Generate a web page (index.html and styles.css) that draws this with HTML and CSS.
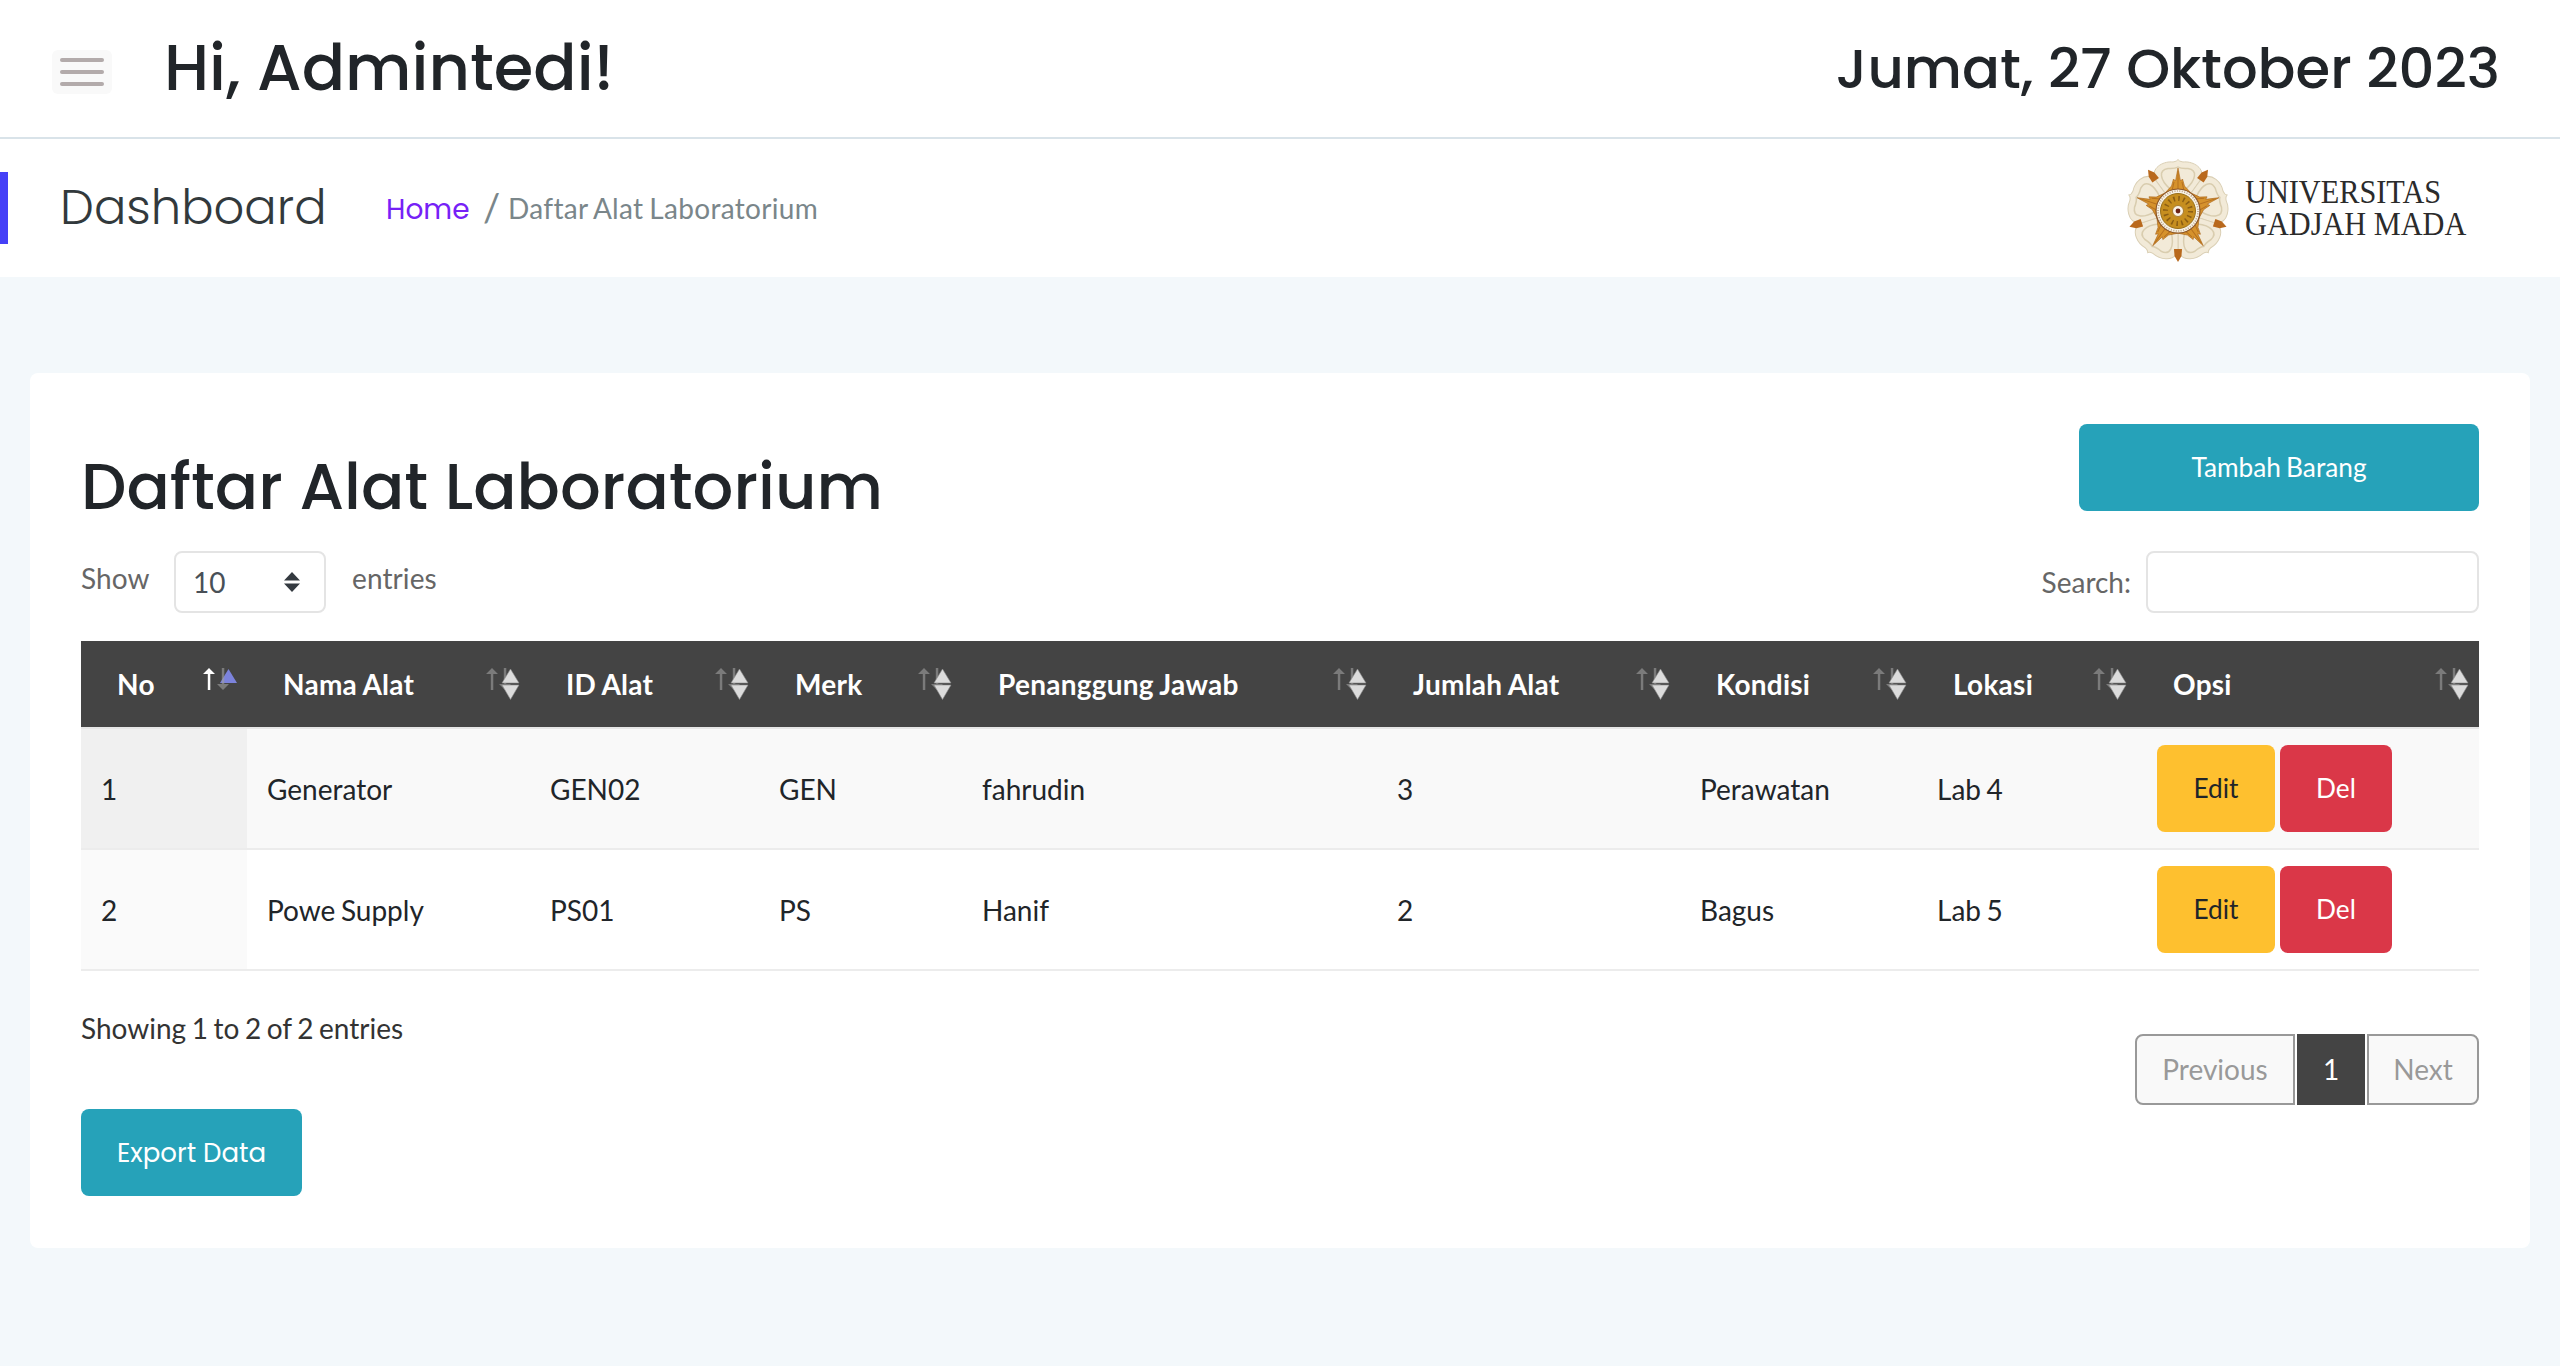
FILE: index.html
```
<!DOCTYPE html>
<html lang="id">
<head>
<meta charset="utf-8">
<title>Daftar Alat Laboratorium</title>
<link rel="stylesheet" href="styles.css">
</head>
<body>
<svg class="defs" aria-hidden="true">
  <defs>
    <symbol id="sort-both" viewBox="0 0 36 44">
      <path class="arrow-off" d="M5.800 13H1L7 7L13 13H8.300V29H5.800Z"/>
      <path class="arrow-off" d="M18.800 7H21.300V23H26L20 29L14 23H18.800Z"/>
      <path class="tri" d="M25.500 8L34 22H17Z"/>
      <path class="tri" d="M17 24H34L25.500 38.500Z"/>
    </symbol>
    <symbol id="sort-asc" viewBox="0 0 36 44">
      <path class="tri-asc" d="M26.500 8L35 22H18Z"/>
      <path class="arrow-on" d="M5.800 13H1L7 7L13 13H8.300V29H5.800Z"/>
      <path class="arrow-off" d="M19.800 7H22.300V23H27L21 29L15 23H19.800Z"/>
    </symbol>
    <g id="petal">
      <path class="petal-fill" d="M0 0L-24 -33C-26 -45 -13 -50 -5 -49Q-1 -49.500 0 -51.500Q1 -49.500 5 -49C13 -50 26 -45 24 -33Z"/>
      <path class="petal-line" d="M-8 -22C-18 -31 -20 -41 -10 -42.500Q-3 -42 0 -44Q3 -42 10 -42.500C20 -41 18 -31 8 -22"/>
    </g>
    <path id="sepal" d="M0 51L-3.500 45L-4 38H4L3.500 45Z"/>
    <g id="ray">
      <path class="ray-fill" d="M0 -43L-2.500 -30L-4.500 -32L-6.500 -25L-13 -18H13L6.500 -25L4.500 -32L2.500 -30Z"/>
      <path class="ray-line" d="M0 -40V-22M-4 -29L-6 -20M4 -29L6 -20"/>
    </g>
  </defs>
</svg>

<header class="topbar">
  <div class="topbar-left">
    <button class="menu" aria-label="Menu"><span></span><span></span><span></span></button>
    <h1 class="greeting">Hi, Admintedi!</h1>
  </div>
  <div class="date">Jumat, 27 Oktober 2023</div>
</header>

<section class="crumbbar">
  <div class="page-name">Dashboard</div>
  <nav class="crumbs"><a class="home">Home</a><span class="slash">/</span><span class="here">Daftar Alat Laboratorium</span></nav>
  <div class="brand">
    <svg class="seal" viewBox="-51 -52 102 104">
      <use href="#petal"/><use href="#petal" transform="rotate(72)"/><use href="#petal" transform="rotate(144)"/><use href="#petal" transform="rotate(216)"/><use href="#petal" transform="rotate(288)"/>
      <g class="sepals">
        <use href="#sepal"/><use href="#sepal" transform="rotate(72)"/><use href="#sepal" transform="rotate(144)"/><use href="#sepal" transform="rotate(216)"/><use href="#sepal" transform="rotate(288)"/>
      </g>
      <use href="#ray"/><use href="#ray" transform="rotate(72)"/><use href="#ray" transform="rotate(144)"/><use href="#ray" transform="rotate(216)"/><use href="#ray" transform="rotate(288)"/>
      <circle class="ring" r="22"/>
      <circle class="ring-beads" r="20"/>
      <circle class="disc" r="17.500"/>
      <circle class="disc-marks" r="12.500"/>
      <circle class="hub" r="5.500"/>
      <circle class="pupil" r="2.400"/>
    </svg>
    <div class="wordmark"><span>UNIVERSITAS</span><span>GADJAH MADA</span></div>
  </div>
</section>

<main class="card">
  <div class="card-head">
    <h2 class="title">Daftar Alat Laboratorium</h2>
    <button class="btn info add">Tambah Barang</button>
  </div>
  <div class="tools">
    <div class="length">
      <span class="tool-label">Show</span>
      <div class="select"><span>10</span><svg viewBox="0 0 16 20"><path d="M8 0L16 8.500H0ZM0 11.500H16L8 20Z"/></svg></div>
      <span class="tool-label">entries</span>
    </div>
    <div class="search"><span>Search:</span><input class="search-input" type="text" aria-label="Search"></div>
  </div>
  <table class="grid">
    <colgroup><col class="c1"><col class="c2"><col class="c3"><col class="c4"><col class="c5"><col class="c6"><col class="c7"><col class="c8"><col class="c9"></colgroup>
    <thead>
      <tr>
        <th><div class="th">No<svg><use href="#sort-asc"/></svg></div></th>
        <th><div class="th">Nama Alat<svg><use href="#sort-both"/></svg></div></th>
        <th><div class="th">ID Alat<svg><use href="#sort-both"/></svg></div></th>
        <th><div class="th">Merk<svg><use href="#sort-both"/></svg></div></th>
        <th><div class="th">Penanggung Jawab<svg><use href="#sort-both"/></svg></div></th>
        <th><div class="th">Jumlah Alat<svg><use href="#sort-both"/></svg></div></th>
        <th><div class="th">Kondisi<svg><use href="#sort-both"/></svg></div></th>
        <th><div class="th">Lokasi<svg><use href="#sort-both"/></svg></div></th>
        <th><div class="th">Opsi<svg><use href="#sort-both"/></svg></div></th>
      </tr>
    </thead>
    <tbody>
      <tr class="odd"><td class="sorted">1</td><td>Generator</td><td>GEN02</td><td>GEN</td><td>fahrudin</td><td>3</td><td>Perawatan</td><td>Lab 4</td><td><div class="actions"><button class="btn edit">Edit</button><button class="btn del">Del</button></div></td></tr>
      <tr><td class="sorted">2</td><td>Powe Supply</td><td>PS01</td><td>PS</td><td>Hanif</td><td>2</td><td>Bagus</td><td>Lab 5</td><td><div class="actions"><button class="btn edit">Edit</button><button class="btn del">Del</button></div></td></tr>
    </tbody>
  </table>
  <div class="foot">
    <div class="foot-left">
      <div class="info-text">Showing 1 to 2 of 2 entries</div>
      <button class="btn info export">Export Data</button>
    </div>
    <div class="pager"><span class="page prev">Previous</span><span class="page current">1</span><span class="page next">Next</span></div>
  </div>
</main>
</body>
</html>
```
FILE: styles.css
```
* { box-sizing: border-box; }
body {
  margin: 0;
  min-height: 1366px;
  background: #f3f8fb;
  color: #212529;
  font-family: Lato, "Liberation Sans", sans-serif;
  font-size: 28px;
  line-height: 42px;
  word-spacing: -1.600px;
}
h1, h2 { margin: 0; }
button { border: 0; font-family: inherit; padding: 0; word-spacing: inherit; }
.defs { position: absolute; width: 0; height: 0; }

.greeting, .date, .page-name, .home, .title, .export {
  font-family: Poppins, Inter, sans-serif;
  white-space: nowrap;
  word-spacing: 0;
}

.topbar {
  display: flex;
  justify-content: space-between;
  height: 139px;
  padding: 0 60px 0 52px;
  background: #fff;
  border-bottom: 2px solid #d9e3e9;
}
.topbar-left { display: flex; gap: 52px; }
.menu {
  display: flex;
  flex-direction: column;
  gap: 8px;
  width: 60px;
  height: 44px;
  margin-top: 50px;
  padding: 8px;
  background: #f9f9f9;
  border-radius: 6px;
}
.menu span { width: 44px; height: 4px; border-radius: 2px; background: #b3abab; }
.greeting { margin-top: 30px; font-size: 64px; font-weight: 500; line-height: 76px; }
.date { margin-top: 34px; font-size: 56px; font-weight: 500; line-height: 70px; }

.crumbbar {
  display: flex;
  height: 138px;
  background: #fff;
}
.page-name {
  width: 386px;
  height: 72px;
  margin-top: 33px;
  padding-left: 52px;
  border-left: 8px solid #4540f7;
  font-size: 48px;
  font-weight: 300;
  line-height: 71px;
  color: #32393c;
}
.crumbs { display: flex; margin-top: 49px; color: #7a868a; }
.home { width: 97px; margin-top: 1px; font-size: 28px; color: #7621f6; }
.slash { width: 25px; margin-top: -2px; font-size: 38px; }
.here { margin-top: -1px; letter-spacing: .32px; }
.brand { display: flex; margin-left: auto; padding-right: 91px; }
.seal { width: 102px; height: 104px; margin-top: 20px; }
.wordmark {
  display: flex;
  flex-direction: column;
  width: 224px;
  margin: 37px 0 0 16px;
  font-family: "Liberation Serif", serif;
  font-size: 33px;
  line-height: 32px;
  color: #2b2b2b;
  white-space: nowrap;
  word-spacing: 0;
  transform: scaleX(.918);
  transform-origin: left;
}
.petal-fill { fill: #f2ead8; stroke: #dacfb4; stroke-width: 1; }
.petal-line { fill: none; stroke: #d9cdaf; stroke-width: 1.500; }
.sepals { fill: #b9691d; }
.ray-fill { fill: #d6922c; stroke: #a9641d; stroke-width: .6; }
.ray-line { fill: none; stroke: #b5701f; stroke-width: 1; }
.ring { fill: #f8f2e6; stroke: #8b5527; stroke-width: 1.2; }
.ring-beads { fill: none; stroke: #b9a184; stroke-width: 1.600; stroke-dasharray: 1 1.5; }
.disc { fill: #c68e1f; stroke: #99701b; stroke-width: 1; }
.disc-marks { fill: none; stroke: #8a5d14; stroke-width: 5; stroke-dasharray: 1.5 3.400; }
.hub { fill: #fbf4e8; stroke: #a77c33; stroke-width: 1; }
.pupil { fill: #6d2415; }

.card {
  height: 875px;
  margin: 96px 30px 0;
  padding: 51px 51px 0;
  border-radius: 8px;
  background: #fff;
}
.card-head { display: flex; justify-content: space-between; height: 127px; }
.title { margin-top: 25px; font-size: 64px; font-weight: 500; line-height: 76px; }
.btn { height: 87px; border-radius: 8px; font-size: 26.250px; line-height: 40px; }
.info { background: #26a2b9; color: #fff; }
.add { width: 400px; padding-bottom: 1px; }

.tools { display: flex; justify-content: space-between; height: 90px; color: #666; }
.length, .search { display: flex; }
.tool-label { margin-top: 6px; letter-spacing: .1px; }
.length .tool-label:first-child { width: 93px; }
.select {
  display: flex;
  justify-content: space-between;
  align-items: center;
  width: 152px;
  height: 62px;
  margin-right: 26px;
  padding: 0 24px 0 17px;
  border: 2px solid #e4e4e4;
  border-radius: 8px;
  color: #495057;
}
.select svg { width: 16px; height: 20px; fill: #343a40; }
.search { align-items: flex-start; gap: 15px; }
.search span { margin-top: 10px; }
.search-input { width: 333px; height: 62px; border: 2px solid #e4e4e4; border-radius: 8px; background: #fff; }

.grid { width: 2398px; table-layout: fixed; border-collapse: separate; border-spacing: 0; }
.c1 { width: 166px; }
.c2 { width: 283px; }
.c3 { width: 229px; }
.c4 { width: 203px; }
.c5 { width: 415px; }
.c6 { width: 303px; }
.c7 { width: 237px; }
.c8 { width: 220px; }
.c9 { width: 342px; }
th {
  height: 88px;
  padding: 0;
  background: #444;
  border-bottom: 2px solid #e6e6e6;
  color: #fff;
  font-weight: 700;
  letter-spacing: .25px;
  word-spacing: -.8px;
  text-align: left;
}
.th { display: flex; justify-content: space-between; align-items: center; height: 86px; padding: 0 9px 0 36px; }
.th svg { width: 36px; height: 44px; margin-top: -2px; }
.arrow-on { fill: #fff; }
.arrow-off { fill: #a0a0a0; fill-opacity: .6; }
.tri { fill: #dcdcdc; stroke: #8c8c8c; stroke-width: .6; }
.tri-asc { fill: #7c83dc; }
td { height: 121px; padding: 0 20px; border-bottom: 2px solid #ececec; }
.odd td { background: #f9f9f9; }
td.sorted { background: #fafafa; }
.odd td.sorted { background: #f0f0f0; }
.actions { display: flex; gap: 5px; margin-top: -1px; }
.edit { width: 118px; background: #fec02f; color: #212529; }
.del { width: 112px; background: #da3748; color: #fff; }

.foot { display: flex; justify-content: space-between; }
.foot-left { padding-top: 36px; color: #333; }
.info-text { height: 102px; }
.export { width: 221px; font-size: 26px; }
.pager { display: flex; gap: 2px; margin-top: 63px; height: 71px; }
.page { border: 2px solid #999; background: #f9f9f9; color: #999; line-height: 67px; text-align: center; }
.prev { width: 160px; border-radius: 8px 0 0 8px; }
.current { width: 68px; background: #444; border-color: #444; color: #fff; }
.next { width: 112px; border-radius: 0 8px 8px 0; }
```
